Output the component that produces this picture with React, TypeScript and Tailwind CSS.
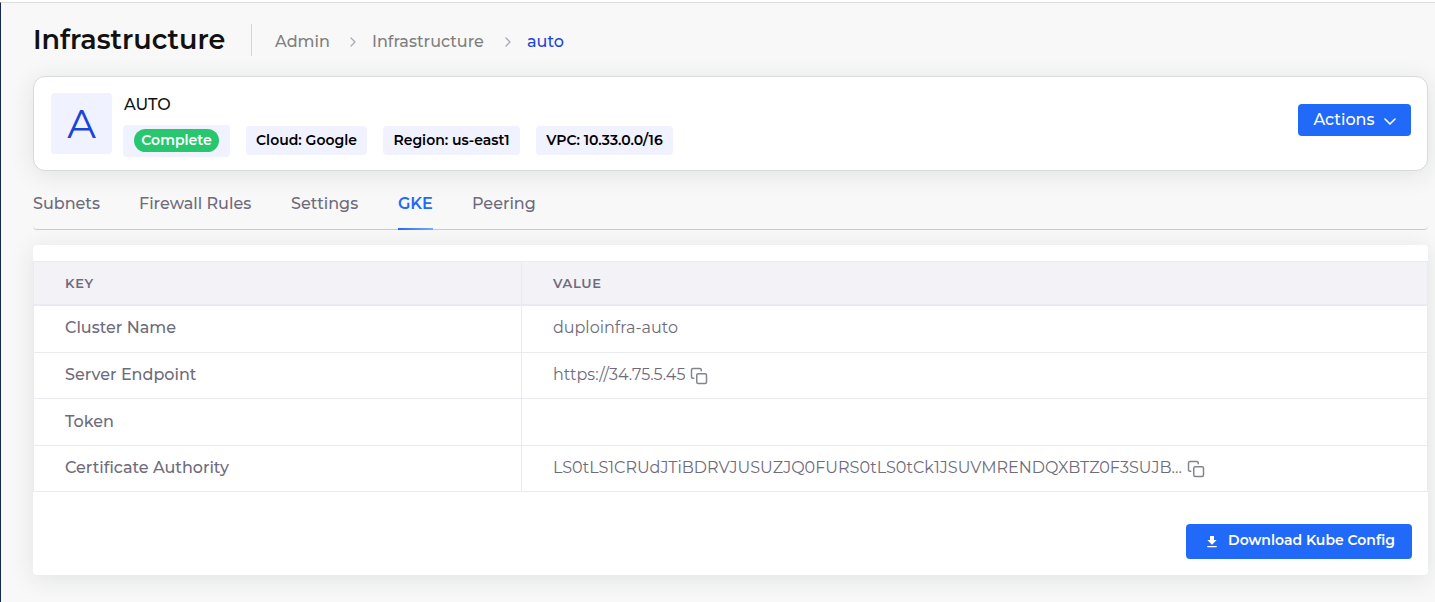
import type { ReactNode } from "react";

const tabs = [
  { label: "Subnets", width: "w-[67px]" },
  { label: "Firewall Rules", width: "w-[113px]" },
  { label: "Settings", width: "w-[68px]" },
  { label: "GKE", width: "w-[35px]" },
  { label: "Peering", width: "w-[64px]" },
];

const rows = [
  { key: "Cluster Name", value: "duploinfra-auto", copy: false },
  { key: "Server Endpoint", value: "https://34.75.5.45", copy: true },
  { key: "Token", value: "", copy: false },
  {
    key: "Certificate Authority",
    value: "LS0tLS1CRUdJTiBDRVJUSUZJQ0FURS0tLS0tCk1JSUVMRENDQXBTZ0F3SUJB...",
    copy: true,
  },
];

function Crumb() {
  return (
    <svg className="mr-[15px] ml-[19px] h-3 w-2 text-[#a9a9b4]" viewBox="0 0 8 12" fill="none" stroke="currentColor" strokeWidth="1.3" strokeLinecap="round" strokeLinejoin="round" aria-hidden="true">
      <path d="M2 2l4 4-4 4" />
    </svg>
  );
}

function CopyIcon() {
  return (
    <svg className="h-[18px] w-[18px]" viewBox="0 0 24 24" fill="none" stroke="currentColor" strokeWidth="2" strokeLinecap="round" strokeLinejoin="round" aria-hidden="true">
      <rect x="9" y="9" width="13" height="13" rx="2" />
      <path d="M5 15H4a2 2 0 0 1-2-2V4a2 2 0 0 1 2-2h9a2 2 0 0 1 2 2v1" />
    </svg>
  );
}

function Chip({ width, children }: { width: string; children: ReactNode }) {
  return (
    <span className={`flex h-[29px] items-center justify-center rounded bg-[#f1f2ff] pb-[2px] whitespace-nowrap ${width}`}>
      {children}
    </span>
  );
}

export default function App() {
  return (
    <div className="flex min-h-screen flex-col bg-white pt-[2px] font-[Montserrat,Inter,sans-serif] text-[#6e6b7b]">
      <main className="grow border-t border-l border-t-[#dcdde0] border-l-[#14284f] bg-[#f8f8f8] pr-[7px] pb-[27px] pl-8">
        <header className="flex h-[73px] items-center">
          <h1 className="w-[218px] text-[27px] leading-8 font-semibold text-[#111]">Infrastructure</h1>
          <nav aria-label="Breadcrumb" className="flex h-8 items-center border-l border-[#d6d6dc] pt-1 pl-[23px] text-base font-medium text-[#7f7f7f]">
            <a href="#admin" className="w-[55px]">Admin</a>
            <Crumb />
            <a href="#infrastructure" className="w-[113px]">Infrastructure</a>
            <Crumb />
            <a href="#auto" aria-current="page" className="text-[#1d46d8]">auto</a>
          </nav>
        </header>

        <section className="flex h-[95px] items-center rounded-xl border border-[#d8dadb] bg-white pr-4 pl-[17px] shadow-[0_4px_24px_rgba(34,41,47,0.1)]">
          <div className="flex h-[61px] w-[61px] items-center justify-center rounded bg-[#f1f2ff] text-[40px] leading-none text-[#1944d8]">A</div>
          <div className="ml-[11px] flex flex-col gap-2 pt-[2px]">
            <h2 className="pl-px text-base leading-6 font-medium text-[#111]">AUTO</h2>
            <div className="flex items-center gap-4 text-sm font-semibold text-black">
              <span className="flex h-8 w-[107px] items-center justify-center rounded bg-[#f1f2ff]">
                <span className="flex h-[23px] w-[85px] items-center justify-center rounded-full bg-[#28c76f] pb-[2px] text-white">Complete</span>
              </span>
              <Chip width="w-[121px]">Cloud: Google</Chip>
              <Chip width="w-[137px]">Region: us-east1</Chip>
              <Chip width="w-[137px]">VPC: 10.33.0.0/16</Chip>
            </div>
          </div>
          <button type="button" className="mb-2 ml-auto flex h-8 w-[113px] items-center justify-center gap-2 rounded bg-[#2169f8] pl-px text-base font-medium text-white">
            Actions
            <svg className="mt-1 h-[14px] w-[14px]" viewBox="0 0 14 14" fill="none" stroke="currentColor" strokeWidth="1.6" strokeLinecap="round" strokeLinejoin="round" aria-hidden="true">
              <path d="M2 4l5 5 5-5" />
            </svg>
          </button>
        </section>

        <nav aria-label="Infrastructure sections" className="flex h-[59px] gap-[39px] rounded border-b border-[#cbcbce] text-base font-medium">
          {tabs.map((tab) => (
            <a
              key={tab.label}
              href={`#${tab.label}`}
              className={`relative flex h-[59px] items-center pt-[6px] whitespace-nowrap ${tab.width} ${tab.label === "GKE" ? "font-semibold text-[#2169f8]" : ""}`}
            >
              {tab.label}
              {tab.label === "GKE" && <span className="absolute inset-x-0 bottom-0 h-[2px] bg-linear-to-r from-[#2169f8] to-[#79a6fb]" />}
            </a>
          ))}
        </nav>

        <section className="mt-[15px] rounded bg-white pt-4 pb-4 shadow-[0_4px_24px_rgba(34,41,47,0.1)]">
          <table className="w-full table-fixed border-collapse text-left">
            <thead>
              <tr className="h-[43px] border border-b-2 border-[#ebe9f1] bg-[#f3f2f7] text-[13px] tracking-wider">
                <th scope="col" className="w-[35%] border-r border-[#ebe9f1] pt-[2px] pl-[31px] font-semibold">KEY</th>
                <th scope="col" className="pt-[2px] pl-[31px] font-semibold">VALUE</th>
              </tr>
            </thead>
            <tbody>
              {rows.map((row) => (
                <tr key={row.key} className="h-[47px] border border-[#ebe9f1] first:h-12 even:h-[46px]">
                  <th scope="row" className="border-r border-[#ebe9f1] pb-px pl-[31px] font-medium">{row.key}</th>
                  <td className="pb-px pl-[31px]">
                    <div className="flex items-center gap-[5px]">
                      <span className="truncate">{row.value}</span>
                      {row.copy && (
                        <button type="button" aria-label={`Copy ${row.key}`} className="mt-px text-[#82868b]">
                          <CopyIcon />
                        </button>
                      )}
                    </div>
                  </td>
                </tr>
              ))}
            </tbody>
          </table>
          <div className="mt-8 flex justify-end pr-4">
            <button type="button" className="flex h-[35px] w-[226px] items-center justify-center gap-2 rounded bg-[#2169f8] pb-[3px] pl-px text-sm font-semibold whitespace-nowrap text-white">
              <svg className="mt-[3px] h-4 w-4" viewBox="0 0 24 24" fill="currentColor" aria-hidden="true">
                <path d="M19 9h-4V3H9v6H5l7 7 7-7zM5 18v2h14v-2H5z" />
              </svg>
              Download Kube Config
            </button>
          </div>
        </section>
      </main>
    </div>
  );
}
